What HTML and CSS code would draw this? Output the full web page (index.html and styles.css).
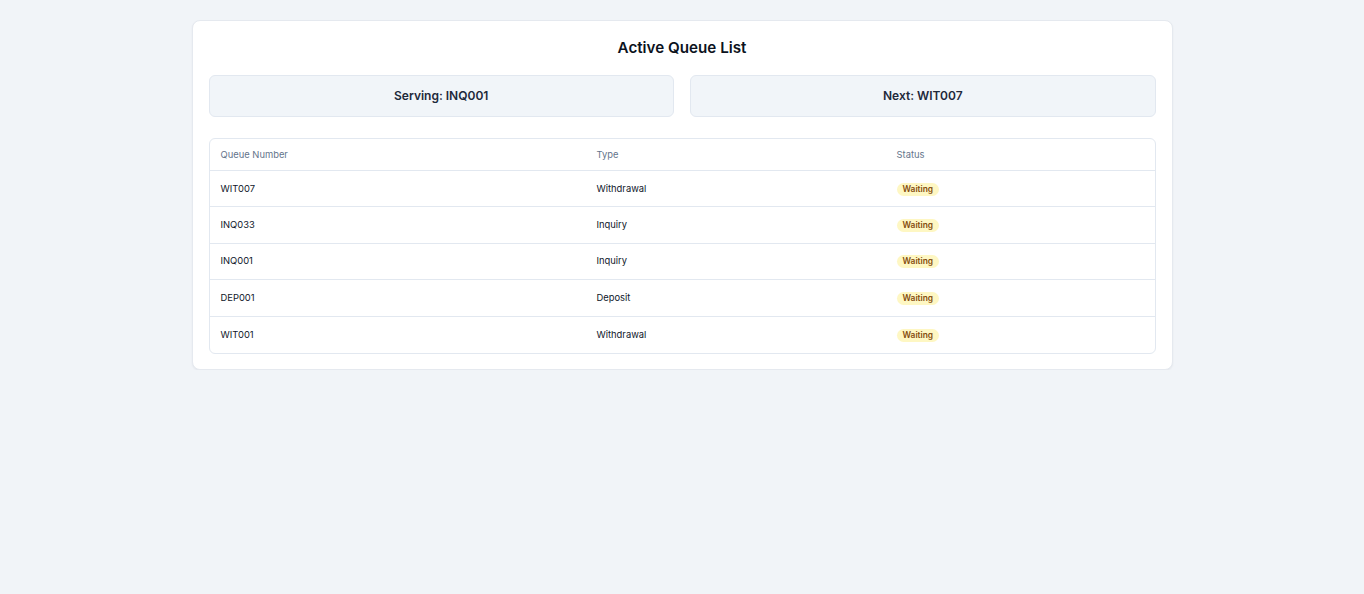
FILE: index.html
```html
<!DOCTYPE html>
<html lang="en">
<head>
<meta charset="utf-8">
<title>Active Queue List</title>
<link rel="stylesheet" href="styles.css">
</head>
<body>
<main class="card">
  <h1 class="title">Active Queue List</h1>
  <div class="summary">
    <div class="summary-box">Serving: INQ001</div>
    <div class="summary-box">Next: WIT007</div>
  </div>
  <div class="table">
    <div class="row head">
      <div class="cell">Queue Number</div>
      <div class="cell">Type</div>
      <div class="cell">Status</div>
    </div>
    <div class="row">
      <div class="cell">WIT007</div>
      <div class="cell">Withdrawal</div>
      <div class="cell"><span class="badge">Waiting</span></div>
    </div>
    <div class="row">
      <div class="cell">INQ033</div>
      <div class="cell">Inquiry</div>
      <div class="cell"><span class="badge">Waiting</span></div>
    </div>
    <div class="row">
      <div class="cell">INQ001</div>
      <div class="cell">Inquiry</div>
      <div class="cell"><span class="badge">Waiting</span></div>
    </div>
    <div class="row">
      <div class="cell">DEP001</div>
      <div class="cell">Deposit</div>
      <div class="cell"><span class="badge">Waiting</span></div>
    </div>
    <div class="row last">
      <div class="cell">WIT001</div>
      <div class="cell">Withdrawal</div>
      <div class="cell"><span class="badge">Waiting</span></div>
    </div>
  </div>
</main>
</body>
</html>
```

FILE: styles.css
```css
* { box-sizing: border-box; }
html, body { margin: 0; padding: 0; }
body {
  background: #f1f4f8;
  font-family: Inter, "Noto Sans", sans-serif;
  color: #0f172a;
  padding-top: 20px;
}
.card {
  width: 981px;
  margin: 0 auto;
  background: #ffffff;
  border: 1px solid #e5e9ef;
  border-radius: 8px;
  box-shadow: 0 1px 2px rgba(15, 23, 42, 0.05);
  padding: 16px 16px 15px;
}
.title {
  margin: 0 0 16px;
  text-align: center;
  font-size: 15.2px;
  line-height: 22px;
  font-weight: 600;
  color: #0b1220;
}
.summary {
  display: grid;
  grid-template-columns: 1fr 1fr;
  gap: 16px;
  margin-bottom: 21px;
}
.summary-box {
  background: #f1f5f9;
  border: 1px solid #e2e8f0;
  border-radius: 6px;
  padding: 11px 12px;
  text-align: center;
  font-size: 12px;
  line-height: 18px;
  font-weight: 600;
  color: #1e293b;
}
.table {
  border: 1px solid #e2e8f0;
  border-radius: 6px;
  overflow: hidden;
}
.row {
  display: grid;
  grid-template-columns: 376px 300px 1fr;
  align-items: center;
  height: 36.4px;
  border-bottom: 1px solid #e2e8f0;
  font-size: 9.4px;
  color: #0f172a;
}
.row.head {
  height: 32px;
  color: #64748b;
}
.row.last { border-bottom: none; }
.cell {
  padding: 0 11px;
  line-height: 14px;
}
.badge {
  display: inline-block;
  background: #fef7c3;
  color: #854d0e;
  font-size: 8.4px;
  font-weight: 600;
  line-height: 13px;
  padding: 0 6px;
  border-radius: 999px;
}
```
